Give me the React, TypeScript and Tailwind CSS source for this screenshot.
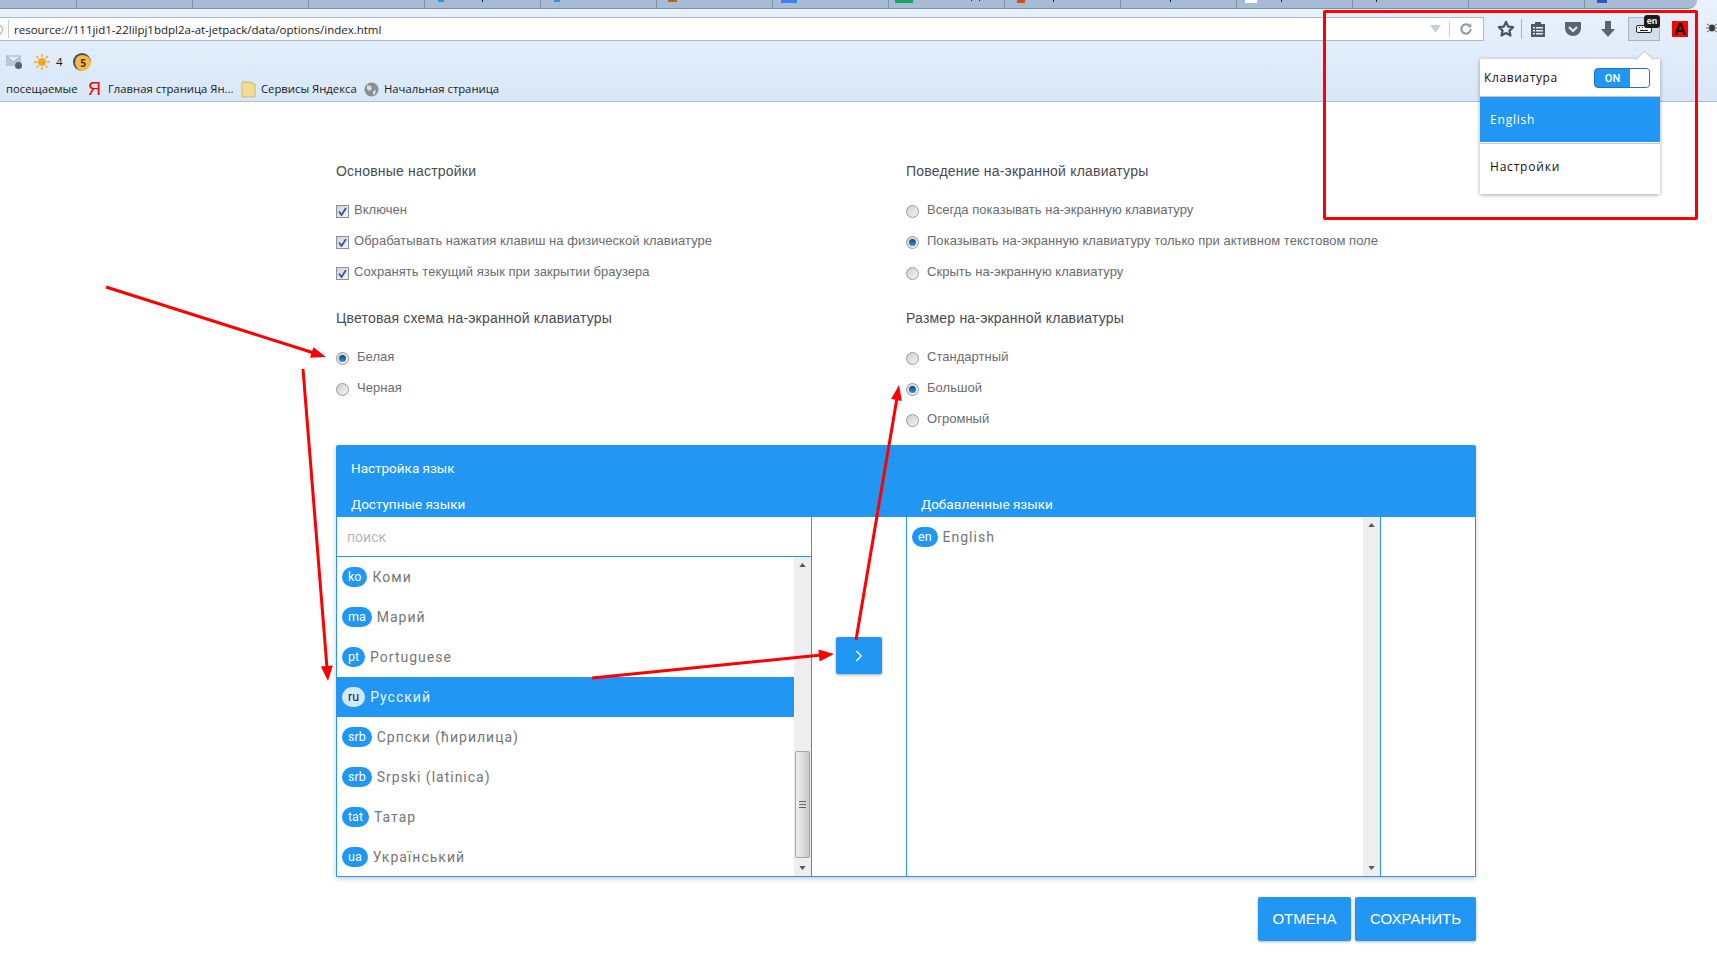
import React from "react";
import { ChevronRight } from "lucide-react";

// bits of favicons and tab titles that stick out at the top of the cropped tab strip
const tabBits: { x: number; w: number; h: string; color: string }[] = [
  { x: 438, w: 6, h: "h-[2px]", color: "bg-[#3d8bf0]" },
  { x: 482, w: 1, h: "h-[2px]", color: "bg-[#222]" },
  { x: 554, w: 6, h: "h-[2px]", color: "bg-[#3d8bf0]" },
  { x: 668, w: 9, h: "h-[2px]", color: "bg-[#b5651d]" },
  { x: 781, w: 16, h: "h-[3px]", color: "bg-[#3f82ee]" },
  { x: 895, w: 18, h: "h-[3px]", color: "bg-[#1fa55a]" },
  { x: 971, w: 1, h: "h-[1px]", color: "bg-[#222]" },
  { x: 979, w: 1, h: "h-[1px]", color: "bg-[#222]" },
  { x: 1017, w: 8, h: "h-[3px]", color: "bg-[#e0442a]" },
  { x: 1053, w: 1, h: "h-[2px]", color: "bg-[#222]" },
  { x: 1170, w: 1, h: "h-[2px]", color: "bg-[#222]" },
  { x: 1245, w: 12, h: "h-[3px]", color: "bg-white" },
  { x: 1281, w: 1, h: "h-[2px]", color: "bg-[#222]" },
  { x: 1376, w: 1, h: "h-[2px]", color: "bg-[#222]" },
  { x: 1597, w: 10, h: "h-[3px]", color: "bg-[#2b57c0]" },
];

const languages = [
  { code: "ko", name: "Коми" },
  { code: "ma", name: "Марий" },
  { code: "pt", name: "Portuguese" },
  { code: "ru", name: "Русский", active: true },
  { code: "srb", name: "Српски (ћирилица)" },
  { code: "srb", name: "Srpski (latinica)" },
  { code: "tat", name: "Татар" },
  { code: "ua", name: "Український" },
];

const CheckRow = ({ label }: { label: string }) => (
  <div className="h-[31px] flex items-center gap-[5px]">
    <span className="mt-1 w-[13px] h-[13px] shrink-0 border border-[#8e8f8f] bg-gradient-to-br from-[#cfd4dc] to-[#f2f4f7] flex items-center justify-center">
      <svg width="9" height="9" viewBox="0 0 9 9">
        <path d="M1 4.5 L3.5 8 L8 1" fill="none" stroke="#3f4f9f" strokeWidth="1.8" />
      </svg>
    </span>
    <span className="text-[13px] tracking-[0.03px] text-[#6b6b72]">{label}</span>
  </div>
);

const RadioRow = ({ label, checked }: { label: string; checked?: boolean }) => (
  <div className="h-[31px] flex items-center gap-[8px]">
    <span className="mt-1 w-[13px] h-[13px] shrink-0 rounded-full border border-[#9a9a9a] bg-gradient-to-br from-[#cfcfcf] to-[#f4f4f4] flex items-center justify-center">
      {checked && <span className="w-[7px] h-[7px] rounded-full bg-gradient-to-b from-[#0b4a78] to-[#2a9be0]" />}
    </span>
    <span className="text-[13px] tracking-[0.03px] text-[#6b6b72]">{label}</span>
  </div>
);

const Heading = ({ children, className }: { children: React.ReactNode; className: string }) => (
  <div className={"h-5 flex items-center text-[14px] tracking-[0.2px] text-[#4a4a4f] " + className}>{children}</div>
);

const ScrollArrow = ({ up }: { up?: boolean }) => (
  <svg width="7" height="4" viewBox="0 0 8 5" className="my-[6px] mx-auto shrink-0">
    <path d={up ? "M4 0 L8 5 L0 5 Z" : "M0 0 L8 0 L4 5 Z"} fill="#55595f" />
  </svg>
);

const LangBadge = ({ code, active }: { code: string; active?: boolean }) => (
  <span
    className={
      "h-5 px-[6px] rounded-full flex items-center justify-center text-[12.5px] " +
      (active ? "bg-[#d3e9fb] text-[#1c1c1c]" : "bg-[#2196f3] text-white")
    }
  >
    {code}
  </span>
);

const LangRow = ({ code, name, active }: { code: string; name: string; active?: boolean }) => (
  <div className={"h-10 shrink-0 pl-[5px] flex items-center gap-[5px] " + (active ? "bg-[#2196f3]" : "")}>
    <LangBadge code={code} active={active} />
    <span className={"text-[14px] tracking-[1px] " + (active ? "text-[#e8f4fe]" : "text-[#757575]")}>{name}</span>
  </div>
);

export default function App() {
  return (
    <div className="relative w-[1717px] h-[957px] overflow-hidden bg-white font-['Liberation_Sans',sans-serif]">
      {/* browser chrome */}
      <div className="h-[102px] border-b border-[#aebfd3] bg-gradient-to-b from-[#e9f2fc] to-[#d8e7f7]">
        <div className="w-[1697px] h-[9px] flex bg-[#a6bbd4] border-b border-[#7d90a8] rounded-br-[10px] overflow-hidden">
          <div className="w-[77px] shrink-0 border-r border-[#7f93ad]" />
          {Array.from({ length: 14 }).map((_, i) => (
            <div key={i} className="w-[116px] shrink-0 border-r border-[#7f93ad]" />
          ))}
        </div>
        <div className="h-[39px] pt-2 flex items-start">
          <div className="w-[1484px] h-6 shrink-0 bg-white border border-l-0 border-[#a8bbd2] flex items-center overflow-hidden">
            <div className="w-[9px] h-[18px] shrink-0 border-r border-[#c9ccd0] flex items-center justify-end pr-[5px]">
              <span className="w-[11px] h-[11px] shrink-0 rounded-full border border-[#9a9a9a]" />
            </div>
            <span className="ml-[5px] pt-[2px] text-[11.5px] text-[#1a1a1a] font-['Open_Sans',sans-serif]">
              resource://111jid1-22lilpj1bdpl2a-at-jetpack/data/options/index.html
            </span>
            <svg width="11" height="8" viewBox="0 0 11 8" className="ml-auto">
              <path d="M0 0 H11 L5.5 8 Z" fill="#c6d0db" />
            </svg>
            <span className="ml-[8px] w-px h-4 bg-[#c9d2dc]" />
            <svg width="14" height="14" viewBox="0 0 24 24" className="ml-[9px] mr-[10px]" fill="none" stroke="#8d99a8" strokeWidth="3.5">
              <path d="M20 12a8 8 0 1 1-3-6.2" />
              <path d="M21 2v7h-7z" fill="#8d99a8" stroke="none" />
            </svg>
          </div>
          <svg width="18" height="18" viewBox="0 0 24 24" className="ml-[13px] mt-[3px] shrink-0" fill="none" stroke="#4a5563" strokeWidth="3" strokeLinejoin="round">
            <path d="M12 2.5l2.9 6.2 6.6.8-4.9 4.6 1.3 6.6-5.9-3.3-5.9 3.3 1.3-6.6-4.9-4.6 6.6-.8z" />
          </svg>
          <span className="ml-[6px] mt-[2px] w-px h-5 bg-[#a9b8c9] shrink-0" />
          <svg width="16" height="18" viewBox="0 0 16 18" className="ml-[8px] mt-[3px] shrink-0">
            <path d="M1 4h4V2h6v2h4v13H1z" fill="#4f5966" />
            <path d="M3 7h2v1.5H3zM6 7h7v1.5H6zM3 10h2v1.5H3zM6 10h7v1.5H6zM3 13h2v1.5H3zM6 13h7v1.5H6z" fill="#e4eef9" />
          </svg>
          <svg width="18" height="16" viewBox="0 0 18 16" className="ml-[18px] mt-[4px] shrink-0">
            <path d="M1 1h16v6c0 5-4 8-8 8s-8-3-8-8z" fill="#5b6571" />
            <path d="M5 6l4 4 4-4" fill="none" stroke="#e4eef9" strokeWidth="2" />
          </svg>
          <svg width="16" height="18" viewBox="0 0 16 18" className="ml-[18px] mt-[3px] shrink-0">
            <path d="M5 1h6v8h4l-7 8-7-8h4z" fill="#5b6571" />
          </svg>
          <div className="ml-[12px] relative w-8 h-6 shrink-0 border border-[#a6b5c6] bg-[#d3dfec]">
            <svg width="16" height="8" viewBox="0 0 16 8" className="absolute left-[7px] top-[7px]">
              <rect x="0.5" y="0.5" width="15" height="7" rx="1.5" fill="#f5f8fb" stroke="#222" />
              <path d="M3 2.5h1M6 2.5h1M9 2.5h1M12 2.5h1M4 5.5h8" stroke="#222" />
            </svg>
            <span className="absolute -top-[3px] -right-px h-[13px] w-4 rounded-[3px] bg-[#1d1d1d] text-white text-[9px] font-bold leading-[12px] text-center font-['Liberation_Sans',sans-serif]">
              en
            </span>
          </div>
          <div className="ml-[12px] mt-1 w-4 h-4 shrink-0 bg-[#f00] flex items-center justify-center text-black text-[17px] leading-none font-bold">
            A
          </div>
          <svg width="12" height="12" viewBox="0 0 12 12" className="ml-[18px] mt-[5px] shrink-0">
            <ellipse cx="6" cy="6" rx="3" ry="3.5" fill="#3f3a36" />
            <path d="M1 2l3 2M11 2L8 4M0 6h3M12 6H9M1 10l3-2M11 10L8 8" stroke="#6b6560" />
          </svg>
        </div>
        <div className="mt-1 h-5 flex items-center pl-[6px] text-[12px] text-[#1a1a1a] font-['Open_Sans',sans-serif]">
          <svg width="17" height="15" viewBox="0 0 17 15">
            <rect y="1" width="15" height="10" fill="#b7c8de" />
            <path d="M0 1l7.5 6L15 1z" fill="#e2ebf5" stroke="#9db0c9" />
            <circle cx="12.5" cy="10.5" r="3.5" fill="#58616c" />
          </svg>
          <svg width="16" height="16" viewBox="0 0 16 16" className="ml-[11px]">
            <circle cx="8" cy="8" r="4" fill="#f5a623" />
            <path d="M8 0v3M8 13v3M0 8h3M13 8h3M2.3 2.3l2 2M11.7 11.7l2 2M13.7 2.3l-2 2M4.3 11.7l-2 2" stroke="#f5a623" strokeWidth="1.5" />
          </svg>
          <span className="ml-[6px] w-[17px] text-[11.5px]">4</span>
          <span className="w-[18px] h-[18px] rounded-full bg-[#f7b84b] border-t-2 border-l-2 border-[#4a4a4a] flex items-center justify-center text-[10px] font-bold text-[#4a3a1a]">5</span>
        </div>
        <div className="mt-[6px] h-[22px] flex items-center pl-[6px] text-[11.3px] text-[#1a1a1a] font-['Open_Sans',sans-serif] whitespace-nowrap">
          <span className="w-[72px]">посещаемые</span>
          <span className="ml-[10px] w-[10px] text-[#f00] text-[18px] leading-none font-['Liberation_Sans_Narrow','Liberation_Sans',sans-serif]">Я</span>
          <span className="ml-[10px] w-[124px]">Главная страница Ян...</span>
          <svg width="15" height="17" viewBox="0 0 15 17" className="ml-[9px]">
            <path d="M1 1h8l5 2v13H1z" fill="#f3dc8b" stroke="#c8b878" />
          </svg>
          <span className="ml-[5px] w-[96px]">Сервисы Яндекса</span>
          <svg width="15" height="15" viewBox="0 0 15 15" className="ml-[7px]">
            <circle cx="7.5" cy="7.5" r="7" fill="#8a8f94" />
            <path d="M3 3l4 1 1 3-3 2-2-2zM9 9l3-1-1 4-2 1z" fill="#d9dde0" />
          </svg>
          <span className="ml-[5px]">Начальная страница</span>
        </div>
      </div>

      {/* options page */}
      <div className="ml-[336px] w-[1140px] pt-[59px]">
        <div className="grid grid-cols-[570px_1fr]">
          <div>
            <Heading className="mb-[13px]">Основные настройки</Heading>
            <CheckRow label="Включен" />
            <CheckRow label="Обрабатывать нажатия клавиш на физической клавиатуре" />
            <CheckRow label="Сохранять текущий язык при закрытии браузера" />
            <Heading className="mt-[21px] mb-[13px]">Цветовая схема на-экранной клавиатуры</Heading>
            <RadioRow label="Белая" checked />
            <RadioRow label="Черная" />
          </div>
          <div>
            <Heading className="mb-[13px]">Поведение на-экранной клавиатуры</Heading>
            <RadioRow label="Всегда показывать на-экранную клавиатуру" />
            <RadioRow label="Показывать на-экранную клавиатуру только при активном текстовом поле" checked />
            <RadioRow label="Скрыть на-экранную клавиатуру" />
            <Heading className="mt-[21px] mb-[13px]">Размер на-экранной клавиатуры</Heading>
            <RadioRow label="Стандартный" />
            <RadioRow label="Большой" checked />
            <RadioRow label="Огромный" />
          </div>
        </div>

        {/* language panel */}
        <div className="mt-[11px] h-[432px] border border-[#2196f3] rounded-t-[2px] shadow-[0_2px_5px_rgba(0,0,0,0.2)] flex flex-col font-['Roboto',sans-serif]">
          <div className="h-[71px] shrink-0 bg-[#2196f3] text-white text-[13.5px]">
            <div className="pl-[14px] pt-[12px] h-[47px]">Настройка язык</div>
            <div className="flex mt-[1px]">
              <div className="w-[570px] pl-[14px]">Доступные языки</div>
              <div className="pl-[14px]">Добавленные языки</div>
            </div>
          </div>
          <div className="flex-1 min-h-0 flex">
            <div className="w-[475px] shrink-0 border-r border-[#2196f3] flex flex-col">
              <div className="h-10 shrink-0 border-b border-[#2196f3] pl-[10px] pt-[2px] flex items-center text-[14px] text-[#b5b5b5]">поиск</div>
              <div className="flex-1 min-h-0 flex">
                <div className="flex-1 flex flex-col overflow-hidden">
                  {languages.map((lang) => (
                    <LangRow key={lang.name} code={lang.code} name={lang.name} active={lang.active} />
                  ))}
                </div>
                <div className="w-[17px] bg-[#eeeeee] flex flex-col">
                  <ScrollArrow up />
                  <div className="flex-1" />
                  <div className="h-[107px] mx-[1px] mb-[2px] border border-[#a5a5a5] rounded-[2px] bg-gradient-to-r from-[#f0f0f0] to-[#c9c9c9] flex items-center justify-center">
                    <div className="w-[7px] h-[7px] border-y border-[#666] flex items-center">
                      <div className="w-full h-px bg-[#666]" />
                    </div>
                  </div>
                  <ScrollArrow />
                </div>
              </div>
            </div>
            <div className="w-[94px] shrink-0 flex justify-center">
              <button type="button" className="mt-[120px] w-[46px] h-[37px] rounded-[2px] bg-[#2196f3] text-white flex items-center justify-center shadow-[0_1px_3px_rgba(0,0,0,0.35)]">
                <ChevronRight size={18} strokeWidth={1.75} />
              </button>
            </div>
            <div className="w-[475px] shrink-0 border-l border-r border-[#2196f3] flex">
              <div className="flex-1">
                <LangRow code="en" name="English" />
              </div>
              <div className="w-[17px] bg-[#eeeeee] flex flex-col justify-between">
                <ScrollArrow up />
                <ScrollArrow />
              </div>
            </div>
          </div>
        </div>

        <div className="mt-5 flex justify-end gap-1">
          <button type="button" className="w-[93px] h-11 rounded-[2px] bg-[#2196f3] text-white text-[15px] shadow-[0_1px_3px_rgba(0,0,0,0.3)]">ОТМЕНА</button>
          <button type="button" className="w-[121px] h-11 rounded-[2px] bg-[#2196f3] text-white text-[15px] shadow-[0_1px_3px_rgba(0,0,0,0.3)]">СОХРАНИТЬ</button>
        </div>
      </div>

      {/* extension popup */}
      <div className="absolute left-[1480px] top-[59px] w-[180px] h-[135px] bg-white shadow-[0_1px_4px_rgba(0,0,0,0.35)] font-['Open_Sans',sans-serif]">
        <div className="absolute -top-[6px] left-[158px] w-[13px] h-[13px] rotate-45 bg-white border-l border-t border-[#c5cdd6]" />
        <div className="relative h-[38px] pl-1 pr-[10px] flex items-center justify-between border-b border-[#c4c8cd]">
          <span className="text-[12px] tracking-[0.6px] text-[#111]">Клавиатура</span>
          <div className="w-[56px] h-5 rounded-[4px] border border-[#1a76c2] bg-[#2196f3] flex overflow-hidden">
            <span className="flex-1 text-center text-white text-[11px] font-medium leading-[20px] font-['Roboto',sans-serif]">ON</span>
            <span className="w-[19px] bg-white" />
          </div>
        </div>
        <div className="h-[45px] pl-[10px] flex items-center bg-[#2196f3] text-white text-[12px] tracking-[0.8px]">English</div>
        <div className="mt-[1px] h-[47px] pl-[10px] flex items-center border-t border-[#c4c8cd] text-[12px] tracking-[0.8px] text-[#111]">Настройки</div>
      </div>

      {/* annotations drawn over the screenshot */}
      <div className="absolute left-[1323px] top-[10px] w-[375px] h-[210px] border-[3px] border-[#f00] rounded-[2px] pointer-events-none" />
      <svg width="1717" height="957" viewBox="0 0 1717 957" className="absolute inset-0 pointer-events-none" fill="none">
        <g stroke="#f00" strokeWidth="3">
          <path d="M106 287 L314 353" />
          <path d="M303 369 L327 668" />
          <path d="M592 678 L821 655" />
          <path d="M856 640 L897 398" />
        </g>
        <g fill="#f00">
          <path d="M326 357 L310 357.8 L313.4 347.3 Z" />
          <path d="M328 681 L320.8 666.5 L332.8 665.5 Z" />
          <path d="M834 654 L818.4 649.5 L819.6 661.5 Z" />
          <path d="M899 385 L901.9 400.9 L891.1 399.1 Z" />
        </g>
      </svg>
      {tabBits.map((bit) => (
        <span key={bit.x} className={"absolute top-0 " + bit.h + " " + bit.color} style={{ left: bit.x, width: bit.w }} />
      ))}
    </div>
  );
}
